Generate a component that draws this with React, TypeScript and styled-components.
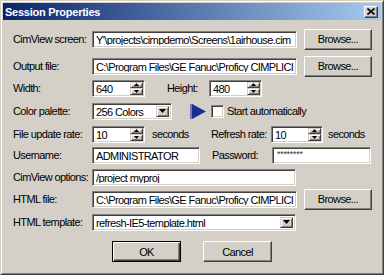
import React from 'react';
import styled, { createGlobalStyle } from 'styled-components';

const Global = createGlobalStyle`
  html, body { margin: 0; padding: 0; background: #D4D0C8; }
  body {
    width: 384px; height: 275px; overflow: hidden;
    font-family: "Liberation Sans", Arial, sans-serif;
    font-size: 11px; color: #000;
  }
  * { box-sizing: border-box; }
`;

const Window = styled.div`
  width: 384px;
  height: 275px;
  background: #D4D0C8;
  border: 1px solid;
  border-color: #D4D0C8 #404040 #404040 #D4D0C8;
  box-shadow: inset 1px 1px #fff, inset -1px -1px #808080;
  padding: 2px;
  display: flex;
  flex-direction: column;
`;

const TitleBar = styled.div`
  height: 17px;
  flex-shrink: 0;
  display: flex;
  align-items: center;
  justify-content: space-between;
  padding: 0 3px 0 2px;
  background: linear-gradient(to right, #0A246A, #A6CAF0);
`;

const Title = styled.span`
  color: #fff;
  font-weight: bold;
  font-size: 11px;
  letter-spacing: -0.25px;
  white-space: nowrap;
`;

const CloseButton = styled.div`
  width: 14px;
  height: 12px;
  background: #D4D0C8;
  border: 1px solid;
  border-color: #fff #404040 #404040 #fff;
  box-shadow: inset -1px -1px #808080;
  display: flex;
  align-items: center;
  justify-content: center;
`;

const Body = styled.div`
  display: flex;
  flex-direction: column;
  padding: 9px 0 0 10px;
`;

const Row = styled.div<{ $mt?: number }>`
  display: flex;
  align-items: center;
  height: 20px;
  margin-top: ${p => p.$mt ?? 0}px;
`;

const Label = styled.span<{ $w?: number; $ml?: number }>`
  flex-shrink: 0;
  width: ${p => (p.$w ? `${p.$w}px` : 'auto')};
  margin-left: ${p => p.$ml ?? 0}px;
  padding-top: 1px;
  font-size: 11px;
  letter-spacing: -0.6px;
  white-space: nowrap;
  line-height: 13px;
`;

const Sunken = styled.div<{ $w: number }>`
  flex-shrink: 0;
  width: ${p => p.$w}px;
  height: 17px;
  background: #fff;
  border: 1px solid;
  border-color: #808080 #fff #fff #808080;
  box-shadow: inset 1px 1px #404040, inset -1px -1px #D4D0C8;
  padding: 2px;
  display: flex;
  align-items: stretch;
  overflow: hidden;
`;

const FieldText = styled.span`
  flex: 1;
  min-width: 0;
  padding-left: 1px;
  font-size: 11px;
  letter-spacing: -0.6px;
  line-height: 13px;
  white-space: nowrap;
  overflow: hidden;
`;

const PasswordText = styled.span`
  flex: 1;
  padding-left: 2px;
  font-size: 9px;
  letter-spacing: -0.3px;
  line-height: 8px;
  color: #333;
  white-space: nowrap;
`;

const SpinColumn = styled.div`
  width: 13px;
  flex-shrink: 0;
  margin: -1px -1px -1px 0;
  display: flex;
  flex-direction: column;
`;

const Raised = styled.div`
  background: #D4D0C8;
  border: 1px solid;
  border-color: #D4D0C8 #404040 #404040 #D4D0C8;
  box-shadow: inset 1px 1px #fff, inset -1px -1px #808080;
  display: flex;
  align-items: center;
  justify-content: center;
`;

const SpinHalf = styled(Raised)`
  flex: 1;
`;

const DropButton = styled(Raised)`
  width: 13px;
  flex-shrink: 0;
`;

const Button = styled.div<{ $w: number; $ml?: number; $default?: boolean }>`
  flex-shrink: 0;
  width: ${p => p.$w}px;
  height: 21px;
  margin-left: ${p => p.$ml ?? 0}px;
  background: #D4D0C8;
  border: 1px solid;
  border-color: ${p => (p.$default ? '#000' : '#fff #404040 #404040 #fff')};
  box-shadow: ${p =>
    p.$default
      ? 'inset 1px 1px #fff, inset -1px -1px #404040, inset -2px -2px #808080'
      : 'inset -1px -1px #808080'};
  display: flex;
  align-items: center;
  justify-content: center;
  font-size: 11px;
  letter-spacing: -0.6px;
  white-space: nowrap;
`;

const Check = styled.div<{ $ml?: number }>`
  flex-shrink: 0;
  width: 13px;
  height: 13px;
  margin-left: ${p => p.$ml ?? 0}px;
  background: #fff;
  border: 1px solid;
  border-color: #808080 #fff #fff #808080;
  box-shadow: inset 1px 1px #404040, inset -1px -1px #D4D0C8;
`;

const IconWrap = styled.div<{ $ml?: number }>`
  flex-shrink: 0;
  margin-left: ${p => p.$ml ?? 0}px;
  display: flex;
`;

const ButtonRow = styled.div`
  display: flex;
  align-items: center;
  margin-top: 9px;
  padding-left: 99px;
`;

const Arrow: React.FC<{ up?: boolean; w?: number }> = ({ up, w = 5 }) => {
  const h = Math.ceil(w / 2);
  return (
    <svg width={w} height={h} viewBox={`0 0 ${w} ${h}`}>
      <polygon
        points={up ? `0,${h} ${w},${h} ${w / 2},0` : `0,0 ${w},0 ${w / 2},${h}`}
        fill="#000"
      />
    </svg>
  );
};

const TextField: React.FC<{ w: number; value: string }> = ({ w, value }) => (
  <Sunken $w={w}>
    <FieldText>{value}</FieldText>
  </Sunken>
);

const SpinField: React.FC<{ w: number; value: string }> = ({ w, value }) => (
  <Sunken $w={w}>
    <FieldText>{value}</FieldText>
    <SpinColumn>
      <SpinHalf><Arrow up w={5} /></SpinHalf>
      <SpinHalf><Arrow w={5} /></SpinHalf>
    </SpinColumn>
  </Sunken>
);

const Combo: React.FC<{ w: number; value: string }> = ({ w, value }) => (
  <Sunken $w={w}>
    <FieldText>{value}</FieldText>
    <DropButton><Arrow w={7} /></DropButton>
  </Sunken>
);

const PlayIcon = () => (
  <svg width="16" height="15" viewBox="0 0 16 15">
    <rect x="0" y="0" width="3" height="15" fill="#7080B0" />
    <polygon points="2,0 16,7.5 2,15" fill="#1A2C8E" />
  </svg>
);

const CloseGlyph = () => (
  <svg width="8" height="7" viewBox="0 0 8 7">
    <path d="M0.5 0.5 L7.5 6.5 M7.5 0.5 L0.5 6.5" stroke="#000" strokeWidth="1.6" />
  </svg>
);

export default function App() {
  return (
    <>
      <Global />
      <Window>
        <TitleBar>
          <Title>Session Properties</Title>
          <CloseButton><CloseGlyph /></CloseButton>
        </TitleBar>
        <Body>
          <Row>
            <Label $w={79}>CimView screen:</Label>
            <TextField w={205} value={"Y'\\projects\\cimpdemo\\Screens\\1airhouse.cim"} />
            <Button $w={68} $ml={7}>Browse...</Button>
          </Row>
          <Row $mt={7}>
            <Label $w={79}>Output file:</Label>
            <TextField w={205} value={'C:\\Program Files\\GE Fanuc\\Proficy CIMPLICI'} />
            <Button $w={68} $ml={7}>Browse...</Button>
          </Row>
          <Row $mt={2}>
            <Label $w={79}>Width:</Label>
            <SpinField w={53} value="640" />
            <Label $w={42} $ml={22}>Height:</Label>
            <SpinField w={53} value="480" />
          </Row>
          <Row $mt={3}>
            <Label $w={79}>Color palette:</Label>
            <Combo w={80} value="256 Colors" />
            <IconWrap $ml={18}><PlayIcon /></IconWrap>
            <Check $ml={5} />
            <Label $ml={3}>Start automatically</Label>
          </Row>
          <Row $mt={3}>
            <Label $w={79}>File update rate:</Label>
            <SpinField w={53} value="10" />
            <Label $w={59} $ml={7}>seconds</Label>
            <Label $w={60}>Refresh rate:</Label>
            <SpinField w={52} value="10" />
            <Label $ml={5}>seconds</Label>
          </Row>
          <Row $mt={1}>
            <Label $w={79}>Username:</Label>
            <TextField w={108} value="ADMINISTRATOR" />
            <Label $w={60} $ml={12}>Password:</Label>
            <Sunken $w={99}>
              <PasswordText>********</PasswordText>
            </Sunken>
          </Row>
          <Row $mt={2}>
            <Label $w={79}>CimView options:</Label>
            <TextField w={204} value="/project myproj" />
          </Row>
          <Row $mt={2}>
            <Label $w={79}>HTML file:</Label>
            <TextField w={205} value={'C:\\Program Files\\GE Fanuc\\Proficy CIMPLICI'} />
            <Button $w={68} $ml={7}>Browse...</Button>
          </Row>
          <Row $mt={3}>
            <Label $w={79}>HTML template:</Label>
            <Combo w={204} value="refresh-IE5-template.html" />
          </Row>
          <ButtonRow>
            <Button $w={69} $default>OK</Button>
            <Button $w={69} $ml={22}>Cancel</Button>
          </ButtonRow>
        </Body>
      </Window>
    </>
  );
}
